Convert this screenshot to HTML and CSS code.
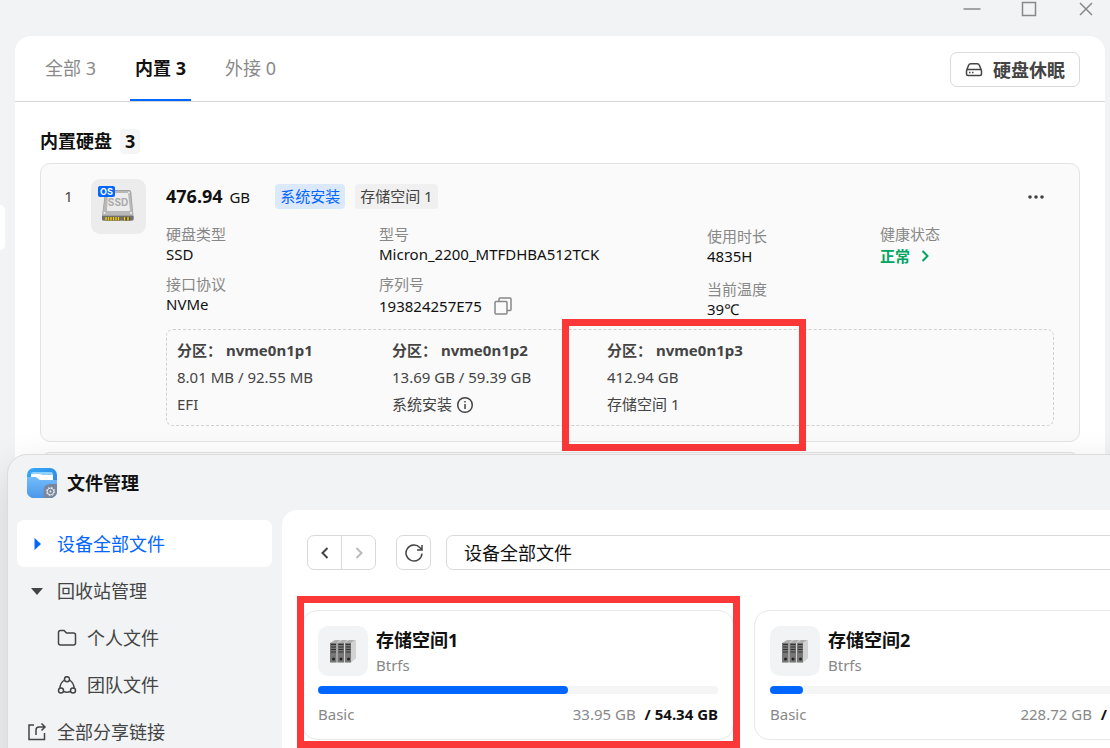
FILE: index.html
```html
<!DOCTYPE html>
<html lang="zh-CN">
<head>
  <meta charset="UTF-8">
  <title>存储管理</title>
  <link rel="stylesheet" href="styles.css">
</head>
<body>
  <svg class="defs" width="0" height="0">
    <symbol id="servers" viewBox="0 0 26 23">
      <path d="M0 3 6 0h20v18l-5 4.500H0z" fill="#d2d2d2"/>
      <path d="M0 3 5 0h5L7 3zM8 3l4-3h5l-3 3zM15 3l4-3h6l-4 3z" fill="#aeaeae"/>
      <path d="M21 3l4-3h1v18l-5 4.500z" fill="#d2d2d2"/>
      <path d="M0 3h6.500v19.500H0zM7.500 3H14v19.500H7.500zM15 3h6v19.500h-6z" fill="#777"/>
      <path d="M1 4.500h5M1 7h5M1 9.500h5M1 12h5M8.500 4.500h5M8.500 7h5M8.500 9.500h5M8.500 12h5M16 4.500h4.500M16 7h4.500M16 9.500h4.500M16 12h4.500" stroke="#333" stroke-width="1.200"/>
      <circle cx="3.500" cy="19" r="1.500" fill="#222"/>
      <circle cx="11" cy="19" r="1.500" fill="#222"/>
      <circle cx="18.500" cy="19" r="1.500" fill="#222"/>
    </symbol>
  </svg>

  <div class="disk-window">
    <header class="window-bar">
      <button aria-label="最小化"><svg width="18" height="18" viewBox="0 0 18 18"><path d="M0.500 9h17" /></svg></button>
      <button aria-label="最大化"><svg width="18" height="18" viewBox="0 0 18 18"><path d="M2.500 2.500h13v13h-13z" /></svg></button>
      <button aria-label="关闭"><svg width="18" height="18" viewBox="0 0 18 18"><path d="M3 3l12 12M15 3L3 15" /></svg></button>
    </header>
    <div class="disk-body">
      <div class="rail"><div class="rail-handle"></div></div>
      <main class="panel">
        <nav class="tabs">
          <button class="tab">全部 3</button>
          <button class="tab active">内置 3</button>
          <button class="tab">外接 0</button>
          <button class="sleep-btn">
            <svg width="18" height="16" viewBox="0 0 18 16"><path d="M1.500 8.500 3.500 3.500Q4.200 1.700 6 1.700h6q1.800 0 2.500 1.800l2 5M3 7.500h12q1.500 0 1.500 1.500v3q0 1.500-1.500 1.500H3q-1.500 0-1.500-1.500V9q0-1.500 1.500-1.500z"/><path d="M4 10.500h1.500M7 10.500h1.500"/></svg>
            硬盘休眠
          </button>
        </nav>

        <section class="disks">
          <h2 class="section-title">内置硬盘 <span class="count">3</span></h2>

          <article class="disk-card">
            <span class="disk-index">1</span>
            <div class="disk-thumb">
              <svg width="55" height="55" viewBox="0 0 55 55">
                <path d="M16 11h22q2 0 2.200 2L42.500 37v3q0 1.500-1.500 1.500H12.500q-1.500 0-1.500-1.500v-3L14 13q.2-2 2-2z" fill="#a0a0a0"/>
                <path d="M17 12h20q2 0 2.200 2L42 36h-30.500L15 14q.3-2 2-2z" fill="#b8b8b8"/>
                <path d="M17 14h20l2 17q0 1-1 1H17q-1 0-1-1z" fill="#ececec"/>
                <path d="M11 37h31.500v3q0 1.500-1.500 1.500H12.500q-1.500 0-1.500-1.500z" fill="#707070"/>
                <path d="M14 38h15v3.500H14zM32 38h7v3.500h-7z" fill="#5d5222"/>
                <path d="M15 38v3.500M17.500 38v3.500M20 38v3.500M22.500 38v3.500M25 38v3.500M27.500 38v3.500M33.500 38v3.500M37 38v3.500" stroke="#f0cc2e" stroke-width="1.500"/>
                <circle cx="38" cy="13.500" r="1" fill="#eee"/>
                <circle cx="13.500" cy="34" r="1" fill="#eee"/>
                <circle cx="40" cy="34" r="1" fill="#eee"/>
                <text x="27" y="27" class="ssd-text">SSD</text>
                <rect x="7" y="7" width="17" height="11" rx="2" fill="#0066ff"/>
                <text x="15.500" y="15.500" class="os-text">OS</text>
              </svg>
            </div>
            <div class="disk-content">
              <div class="disk-head">
                <span class="disk-size"><strong>476.94</strong> GB</span>
                <span class="tag tag-blue">系统安装</span>
                <span class="tag">存储空间 1</span>
                <button class="more" aria-label="更多"><svg width="16" height="6" viewBox="0 0 16 6"><circle cx="2" cy="3" r="1.800"/><circle cx="8" cy="3" r="1.800"/><circle cx="14" cy="3" r="1.800"/></svg></button>
              </div>
              <div class="disk-info">
                <dl>
                  <dt>硬盘类型</dt><dd>SSD</dd>
                  <dt>接口协议</dt><dd>NVMe</dd>
                </dl>
                <dl>
                  <dt>型号</dt><dd>Micron_2200_MTFDHBA512TCK</dd>
                  <dt>序列号</dt>
                  <dd class="serial">193824257E75
                    <button aria-label="复制"><svg width="18" height="18" viewBox="0 0 18 18"><path d="M1 5.500q0-1 1-1h10q1 0 1 1V16q0 1-1 1H2q-1 0-1-1zM5 4.500V2q0-1 1-1h10q1 0 1 1v10q0 1.500-1 1.500h-3"/></svg></button>
                  </dd>
                </dl>
                <dl class="loose">
                  <dt>使用时长</dt><dd>4835H</dd>
                  <dt>当前温度</dt><dd>39℃</dd>
                </dl>
                <dl>
                  <dt>健康状态</dt>
                  <dd class="healthy"><a href="#">正常 <svg width="8" height="12" viewBox="0 0 8 12"><path d="M1.500 1l5 5-5 5"/></svg></a></dd>
                </dl>
              </div>
              <div class="partitions">
                <div class="partition">
                  <p class="partition-name">分区： nvme0n1p1</p>
                  <p>8.01 MB / 92.55 MB</p>
                  <p>EFI</p>
                </div>
                <div class="partition">
                  <p class="partition-name">分区： nvme0n1p2</p>
                  <p>13.69 GB / 59.39 GB</p>
                  <p class="with-icon">系统安装 <svg width="18" height="18" viewBox="0 0 18 18"><circle cx="9" cy="9" r="7.300"/><path d="M9 8v5M9 5v1.500"/></svg></p>
                </div>
                <div class="partition">
                  <p class="partition-name">分区： nvme0n1p3</p>
                  <p>412.94 GB</p>
                  <p>存储空间 1</p>
                  <div class="mark mark-partition"></div>
                </div>
              </div>
            </div>
          </article>

          <article class="disk-card"></article>
        </section>
      </main>
    </div>
  </div>

  <div class="file-window">
    <header class="file-title">
      <svg width="30" height="30" viewBox="0 0 30 30">
        <defs>
          <linearGradient id="back" x1="0" y1="0" x2="1" y2="1"><stop offset="0" stop-color="#36a9f8"/><stop offset="1" stop-color="#2b7fe0"/></linearGradient>
          <linearGradient id="front" x1="0" y1="0" x2="0" y2="1"><stop offset="0" stop-color="#72bcfb"/><stop offset="1" stop-color="#4b98ea"/></linearGradient>
          <clipPath id="round"><rect width="30" height="30" rx="7"/></clipPath>
        </defs>
        <g clip-path="url(#round)">
          <rect width="30" height="30" fill="url(#back)"/>
          <path d="M6 4h18q2 0 2 2v6H4V6q0-2 2-2z" fill="#8fd0fd"/>
          <path d="M5 6h8l2 1h11v6H4V7q0-1 1-1z" fill="#fff"/>
          <path d="M0 9h8q2 0 3 1.500 1 1.500 3 1.500h16v18H0z" fill="url(#front)"/>
          <path d="M30 16v14H16.500v-7q0-7 7-7z" fill="#7a8699"/>
          <circle cx="23.500" cy="23.500" r="3.300" stroke="#e8ebef" stroke-width="1"/>
          <circle cx="23.500" cy="23.500" r="4.200" stroke="#e8ebef" stroke-width="1" stroke-dasharray="1.650 1.650"/>
          <circle cx="23.500" cy="23.500" r="1" fill="#e8ebef"/>
        </g>
      </svg>
      <h1>文件管理</h1>
    </header>
    <div class="file-body">
      <nav class="sidebar">
        <a class="side-item active" href="#"><svg width="20" height="18" viewBox="0 0 20 18"><path class="solid" d="M7.500 3l6.500 6-6.500 6z"/></svg>设备全部文件</a>
        <a class="side-item" href="#"><svg width="20" height="18" viewBox="0 0 20 18"><path class="solid" d="M4 6h12L10 13z"/></svg>回收站管理</a>
        <a class="side-item sub" href="#"><svg width="20" height="18" viewBox="0 0 20 18"><path d="M1.500 14V3.500q0-2 2-2H7l2.500 2.500h7q2 0 2 2v8q0 2-2 2h-13q-2 0-2-2z"/></svg>个人文件</a>
        <a class="side-item sub" href="#"><svg width="20" height="18" viewBox="0 0 20 18"><circle cx="10" cy="3.200" r="2.500"/><circle cx="4" cy="14.500" r="2.500"/><circle cx="16" cy="14.500" r="2.500"/><path d="M7.500 4Q3 7 3 12M12.500 4q4.500 3 4.500 8M6.500 15.500q3.500 1.500 7 0"/></svg>团队文件</a>
        <a class="side-item" href="#"><svg width="20" height="18" viewBox="0 0 20 18"><path d="M7 2H2v14.500h15.500V10M9 12V7q0-3 3-3h6M14.500.500 18 4l-3.500 3.500"/></svg>全部分享链接</a>
      </nav>
      <main class="files">
        <div class="toolbar">
          <div class="history">
            <button aria-label="后退"><svg width="8" height="12" viewBox="0 0 8 12"><path d="M6.500 1l-5 5 5 5"/></svg></button>
            <button aria-label="前进" disabled><svg width="8" height="12" viewBox="0 0 8 12"><path d="M1.500 1l5 5-5 5"/></svg></button>
          </div>
          <button class="refresh" aria-label="刷新"><svg width="18" height="18" viewBox="0 0 18 18"><path d="M17 9.500a8 8 0 1 1-2-5.800L17 5.500M17 1v5h-5"/></svg></button>
          <input class="address" type="text" value="设备全部文件" aria-label="路径">
        </div>
        <div class="volumes">
          <article class="volume">
            <div class="volume-head">
              <div class="volume-icon"><svg width="26" height="23"><use href="#servers"/></svg></div>
              <div><h3>存储空间1</h3><p>Btrfs</p></div>
            </div>
            <div class="bar"><div class="bar-fill" style="width: 62.5%"></div></div>
            <div class="volume-foot"><span>Basic</span><span>33.95 GB <strong>/ 54.34 GB</strong></span></div>
            <div class="mark mark-volume"></div>
          </article>
          <article class="volume">
            <div class="volume-head">
              <div class="volume-icon"><svg width="26" height="23"><use href="#servers"/></svg></div>
              <div><h3>存储空间2</h3><p>Btrfs</p></div>
            </div>
            <div class="bar"><div class="bar-fill" style="width: 8.2%"></div></div>
            <div class="volume-foot"><span>Basic</span><span>228.72 GB <strong>/ 2790 GB</strong></span></div>
          </article>
        </div>
      </main>
    </div>
  </div>
</body>
</html>
```
FILE: styles.css
```css
* {
  box-sizing: border-box;
}

body {
  margin: 0;
  height: 100vh;
  overflow: hidden;
  position: relative;
  background-color: #f1f3f5;
  font-family: "Noto Sans", "Noto Sans CJK SC", sans-serif;
  font-size: 15px;
  line-height: 20px;
  color: #111;
}

h1, h2, h3, p, dl, dd {
  margin: 0;
}

button {
  padding: 0;
  border: none;
  background: none;
  font: inherit;
  color: inherit;
  cursor: pointer;
}

a {
  color: inherit;
  text-decoration: none;
}

svg {
  flex: none;
  fill: none;
  stroke-width: 1.5;
}

.defs {
  position: absolute;
}

/* disk manager */
.window-bar {
  display: flex;
  justify-content: flex-end;
  gap: 39px;
  height: 36px;
  padding-right: 15px;
}

.window-bar button {
  height: 18px;
  stroke: #888;
}

.window-bar svg {
  display: block;
}

.disk-body {
  display: flex;
  padding-right: 5px;
}

.rail {
  width: 15px;
  padding-top: 169px;
}

.rail-handle {
  width: 5px;
  height: 45px;
  background-color: #fff;
  border-radius: 0 6px 6px 0;
}

.panel {
  flex: 1;
  background-color: #fff;
  border-radius: 16px 16px 0 0;
}

.tabs {
  display: flex;
  gap: 29px;
  height: 66px;
  padding: 0 25px;
  border-bottom: 1px solid #d6d6d6;
  font-size: 18px;
}

.tab {
  padding: 0 5px;
  color: #8a8a8a;
  border-bottom: 2px solid transparent;
}

.tab.active {
  color: #111;
  font-weight: 700;
  border-bottom-color: #0066ff;
}

.sleep-btn {
  display: flex;
  align-items: center;
  justify-content: center;
  gap: 10px;
  width: 130px;
  height: 35px;
  margin: 16px 0 0 auto;
  border: 1px solid #d9d9d9;
  border-radius: 7px;
  color: #444;
  font-weight: 700;
  stroke: #444;
}

.disks {
  padding: 27px 25px 0;
}

.section-title {
  display: flex;
  align-items: center;
  gap: 8px;
  font-size: 18px;
  line-height: 25px;
}

.count {
  padding: 0 5px;
  background-color: #f5f5f5;
  border-radius: 4px;
}

.disk-card {
  display: flex;
  min-height: 100px;
  margin: 9px 0 10px;
  padding: 15px 25px 15px 15px;
  background-color: #fafafa;
  border: 1px solid #e3e3e3;
  border-radius: 10px;
}

.disk-index {
  width: 25px;
  line-height: 35px;
  text-align: center;
  color: #444;
}

.disk-thumb {
  width: 55px;
  height: 55px;
  margin: 0 20px 0 10px;
  background-color: #ececec;
  border-radius: 9px;
}

.ssd-text, .os-text {
  font-family: Inter, sans-serif;
  font-weight: 700;
  font-size: 9px;
  text-anchor: middle;
}

.ssd-text {
  font-size: 10px;
  fill: #aaa;
}

.os-text {
  fill: #fff;
}

.disk-content {
  flex: 1;
}

.disk-head {
  display: flex;
  align-items: center;
  gap: 10px;
  height: 35px;
}

.disk-size {
  margin-right: 15px;
}

.disk-size strong {
  margin-right: 3px;
  font-size: 18px;
}

.tag {
  padding: 0 5px;
  line-height: 25px;
  background-color: #f0f0f0;
  border-radius: 4px;
  color: #444;
}

.tag-blue {
  background-color: #dce8fb;
  color: #0066ff;
}

.more {
  margin-left: auto;
  margin-right: 10px;
  line-height: 6px;
}

.more svg {
  display: block;
  fill: #444;
}

.disk-info {
  display: grid;
  grid-template-columns: 213fr 328fr 173fr 174fr;
  height: 115px;
  padding-top: 10px;
}

dt {
  color: #888;
}

dd {
  margin-bottom: 10px;
}

.serial {
  display: flex;
  align-items: center;
  gap: 12px;
  height: 24px;
}

.serial button {
  height: 18px;
  stroke: #888;
}

.serial svg {
  display: block;
}

.loose {
  padding-top: 2px;
}

.loose dd {
  margin-bottom: 13px;
}

.healthy {
  padding-top: 2px;
  color: #00a562;
  font-weight: 700;
}

.healthy a {
  display: flex;
  align-items: center;
  gap: 11px;
}

.healthy svg {
  stroke: #00a562;
  stroke-width: 2;
}

.partitions {
  display: grid;
  grid-template-columns: repeat(4, 1fr);
  padding: 7px 16px 7px 10px;
  border: 1px dashed #d0d0d0;
  border-radius: 7px;
  color: #444;
  line-height: 27px;
}

.partition {
  position: relative;
}

.partition-name {
  font-weight: 700;
}

.with-icon {
  display: flex;
  align-items: center;
  gap: 4px;
  stroke: #444;
}

/* red highlight boxes */
.mark {
  position: absolute;
  border: 7px solid #fb3838;
  pointer-events: none;
}

.mark-partition {
  top: -18px;
  left: -45px;
  width: 244px;
  height: 132px;
}

.mark-volume {
  top: -15px;
  left: -6px;
  right: -7px;
  bottom: -9px;
}

/* file manager */
.file-window {
  position: absolute;
  top: 454px;
  left: 7px;
  right: -94px;
  bottom: -60px;
  display: flex;
  flex-direction: column;
  background-color: #f1f3f5;
  border: 1px solid #dcdcdc;
  border-radius: 20px;
  box-shadow: 0 15px 40px rgba(0, 0, 0, 0.15);
}

.file-title {
  display: flex;
  align-items: center;
  gap: 10px;
  height: 55px;
  padding: 0 19px;
}

.file-title h1 {
  font-size: 18px;
}

.file-body {
  flex: 1;
  display: flex;
  gap: 10px;
}

.sidebar {
  width: 264px;
  padding: 10px 0 0 9px;
}

.side-item {
  display: flex;
  align-items: center;
  gap: 10px;
  height: 47px;
  padding-left: 10px;
  border-radius: 7px;
  font-size: 18px;
  color: #444;
  stroke: #444;
}

.side-item .solid {
  fill: #444;
  stroke: none;
}

.side-item.sub {
  padding-left: 40px;
}

.side-item.active {
  background-color: #fff;
  color: #0066ff;
}

.side-item.active .solid {
  fill: #0066ff;
}

.files {
  flex: 1;
  padding: 25px 17px 0 20px;
  background-color: #fff;
  border-radius: 15px 0 0 0;
}

.toolbar {
  display: flex;
  height: 35px;
  padding-left: 5px;
  stroke: #444;
}

.history {
  display: flex;
  width: 69px;
  border: 1px solid #d9d9d9;
  border-radius: 7px;
}

.history button {
  flex: 1;
}

.history svg {
  stroke-width: 2;
}

.history button + button {
  border-left: 1px solid #d9d9d9;
  stroke: #bbb;
}

.refresh {
  width: 35px;
  margin: 0 15px 0 20px;
  border: 1px solid #d9d9d9;
  border-radius: 7px;
}

.toolbar svg {
  display: block;
  margin: 0 auto;
}

.address {
  flex: 1;
  padding: 0 17px;
  border: 1px solid #d9d9d9;
  border-radius: 7px;
  font: inherit;
  font-size: 18px;
  color: #111;
}

.volumes {
  display: grid;
  grid-template-columns: 1fr 1fr;
  gap: 20px;
  padding-top: 40px;
}

.volume {
  position: relative;
  height: 130px;
  padding: 15px;
  border: 1px solid #e8e8e8;
  border-radius: 15px;
}

.volume-head {
  display: flex;
  gap: 8px;
  color: #888;
}

.volume-icon {
  display: flex;
  align-items: center;
  justify-content: center;
  width: 50px;
  height: 50px;
  background-color: #f1f3f5;
  border-radius: 10px;
}

.volume h3 {
  font-size: 18px;
  line-height: 29px;
  color: #111;
}

.bar {
  height: 8px;
  margin: 10px 0;
  background-color: #f5f5f5;
  border-radius: 4px;
}

.bar-fill {
  height: 8px;
  background-color: #0066ff;
  border-radius: 4px;
}

.volume-foot {
  display: flex;
  justify-content: space-between;
  color: #888;
}

.volume-foot strong {
  margin-left: 5px;
  color: #111;
}
```
